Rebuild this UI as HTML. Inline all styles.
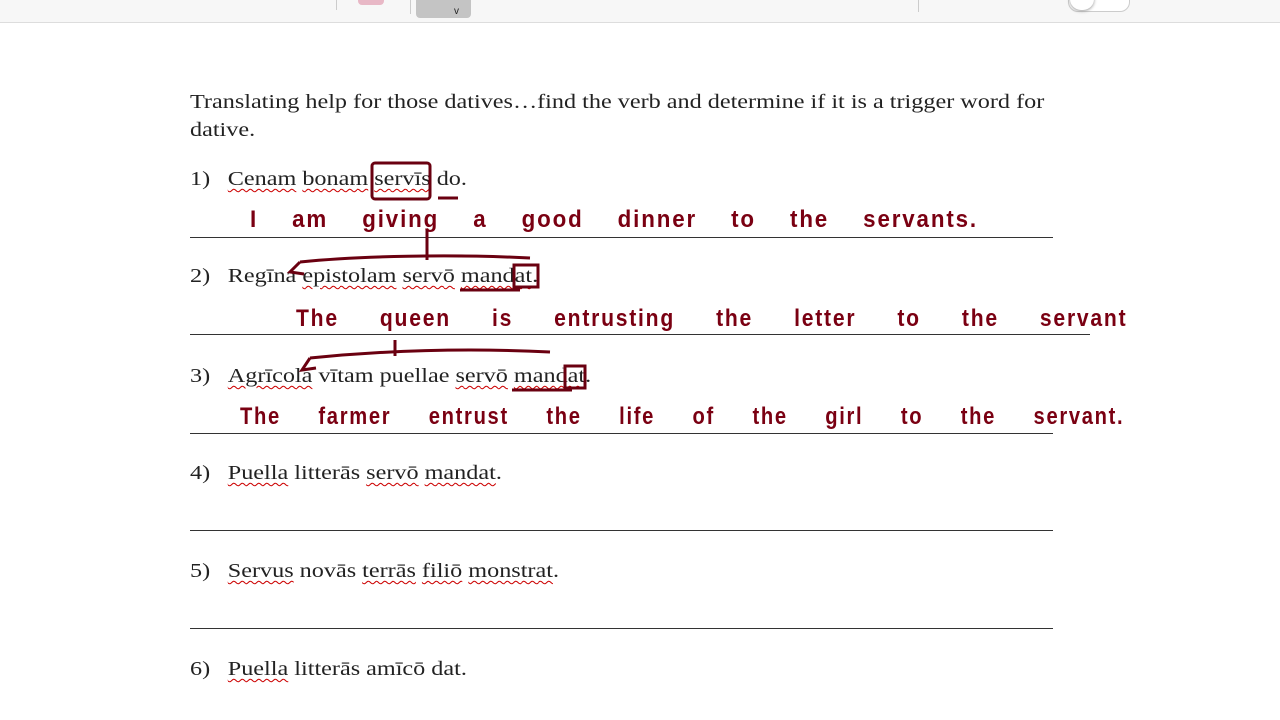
<!DOCTYPE html>
<html><head><meta charset="utf-8"><style>
body{margin:0;width:1280px;height:720px;background:#fff;overflow:hidden;position:relative;font-family:"Liberation Serif",serif;color:#222}
.tb{position:absolute;left:0;top:0;width:1280px;height:22px;background:#f7f7f7;border-bottom:1px solid #ddd}
.t{position:absolute;font-size:20.5px;white-space:nowrap;line-height:1;left:0;transform:scaleX(1.18);transform-origin:190px 0}
.n{position:absolute;left:190px}
.l{position:absolute;height:1px;background:#333;left:190px}
.hw{position:absolute;font-family:"Liberation Sans",sans-serif;color:#7a0012;font-size:24px;white-space:nowrap;letter-spacing:2px;font-weight:bold;transform-origin:0 0}
u{text-decoration:underline wavy #c00 1px;text-underline-offset:3px}
</style></head><body>
<div class="tb">
<div style="position:absolute;left:336px;top:0;width:1px;height:10px;background:#ccc"></div>
<div style="position:absolute;left:358px;top:0;width:26px;height:5px;background:#e8b8c6;border-radius:0 0 4px 4px"></div>
<div style="position:absolute;left:410px;top:0;width:1px;height:14px;background:#ccc"></div>
<div style="position:absolute;left:416px;top:0;width:55px;height:18px;background:#c4c4c4;border-radius:0 0 4px 4px"></div>
<div style="position:absolute;left:454px;top:6px;font-size:10px;font-family:'Liberation Sans'">v</div>
<div style="position:absolute;left:918px;top:0;width:1px;height:12px;background:#ccc"></div>
<div style="position:absolute;left:1068px;top:-10px;width:60px;height:20px;border:1px solid #ccc;border-radius:10px;background:#fff"></div>
<div style="position:absolute;left:1070px;top:-12px;width:24px;height:22px;border-radius:12px;background:#fff;box-shadow:0 1px 3px #999"></div>
</div>
<div class="t" style="top:92px"><span class="n">Translating help for those datives…find the verb and determine if it is a trigger word for</span></div>
<div class="t" style="top:120px"><span class="n">dative.</span></div>
<div class="t" style="top:169px"><span class="n">1)</span><span style="position:absolute;left:222px"><u>Cenam</u> <u>bonam</u> <u>servīs</u> do.</span></div>
<div class="t" style="top:266px"><span class="n">2)</span><span style="position:absolute;left:222px">Regīna <u>epistolam</u> <u>servō</u> <u>mandat</u>.</span></div>
<div class="t" style="top:366px"><span class="n">3)</span><span style="position:absolute;left:222px"><u>Agrīcola</u> vītam puellae <u>servō</u> <u>mandat</u>.</span></div>
<div class="t" style="top:463px"><span class="n">4)</span><span style="position:absolute;left:222px"><u>Puella</u> litterās <u>servō</u> <u>mandat</u>.</span></div>
<div class="t" style="top:561px"><span class="n">5)</span><span style="position:absolute;left:222px"><u>Servus</u> novās <u>terrās</u> <u>filiō</u> <u>monstrat</u>.</span></div>
<div class="t" style="top:659px"><span class="n">6)</span><span style="position:absolute;left:222px"><u>Puella</u> litterās amīcō dat.</span></div>
<div class="l" style="top:237px;width:863px"></div>
<div class="l" style="top:334px;width:900px"></div>
<div class="l" style="top:433px;width:863px"></div>
<div class="l" style="top:530px;width:863px"></div>
<div class="l" style="top:628px;width:863px"></div>
<div class="hw" style="left:250px;top:206px;word-spacing:28px;transform:scaleX(.93)">I am giving a good dinner to the servants.</div>
<div class="hw" style="left:296px;top:305px;word-spacing:38px;transform:scaleX(.88)">The queen is entrusting the letter to the servant</div>
<div class="hw" style="left:240px;top:403px;word-spacing:36px;transform:scaleX(.84)">The farmer entrust the life of the girl to the servant.</div>
<svg style="position:absolute;left:0;top:0" width="1280" height="720" fill="none" stroke="#6a0010" stroke-width="3">
<rect x="372" y="163" width="58" height="36" rx="3"/>
<path d="M438 198 h20"/>
<path d="M300 262 c60 -6 150 -8 230 -4"/><path d="M300 262 l-10 10 l14 2"/><path d="M427 230 v30"/>
<rect x="514" y="265" width="24" height="22"/><path d="M460 290 h60"/>
<path d="M310 358 c80 -8 160 -10 240 -6"/><path d="M310 358 l-8 12 l14 -2"/><path d="M395 340 v16"/>
<rect x="565" y="366" width="20" height="22"/><path d="M512 390 h60"/>
</svg>
</body></html>
